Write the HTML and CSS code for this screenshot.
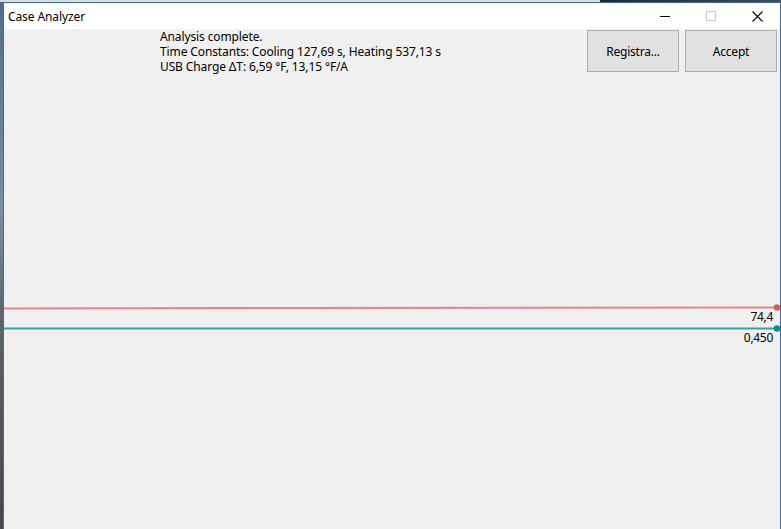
FILE: index.html
```html
<!DOCTYPE html>
<html>
<head>
<meta charset="utf-8">
<title>Case Analyzer</title>
<link rel="stylesheet" href="styles.css">
</head>
<body>
<div class="window">
  <div class="titlebar">
    <span class="title">Case Analyzer</span>
    <div class="controls">
      <span class="ctl">
        <svg width="10" height="10" viewBox="0 0 10 10"><line x1="0" y1="5.5" x2="10" y2="5.5" stroke="#000" stroke-width="1"/></svg>
      </span>
      <span class="ctl">
        <svg width="10" height="10" viewBox="0 0 10 10"><rect x="0.5" y="0.5" width="9" height="9" fill="none" stroke="#c8c8c8" stroke-width="1"/></svg>
      </span>
      <span class="ctl">
        <svg width="11" height="11" viewBox="0 0 11 11"><path d="M0.5 0.5 L10.5 10.5 M10.5 0.5 L0.5 10.5" stroke="#000" stroke-width="1.1" fill="none"/></svg>
      </span>
    </div>
  </div>
  <div class="content">
    <div class="header">
      <div class="status">
        <div class="line">Analysis complete.</div>
        <div class="line">Time Constants: Cooling 127,69 s, Heating 537,13 s</div>
        <div class="line">USB Charge ΔT: 6,59 °F, 13,15 °F/A</div>
      </div>
      <div class="buttons">
        <button class="btn">Registra...</button>
        <button class="btn">Accept</button>
      </div>
    </div>
    <div class="chart">
      <svg class="plot" width="776" height="454" viewBox="0 0 776 454">
        <path d="M0 233.5 L300 233 L773 232.5" stroke="#e08888" stroke-width="2" fill="none"/>
        <circle cx="773" cy="232.5" r="3.3" fill="#d25f5f"/>
        <text x="769" y="246" text-anchor="end" class="lbl">74,4</text>
        <line x1="0" y1="253.5" x2="773" y2="253.5" stroke="#3e9e9e" stroke-width="2"/>
        <circle cx="773" cy="253.5" r="3.3" fill="#178a86"/>
        <text x="769" y="267" text-anchor="end" class="lbl">0,450</text>
      </svg>
    </div>
  </div>
</div>
</body>
</html>
```
FILE: styles.css
```css
html, body {
  margin: 0;
  padding: 0;
}
body {
  width: 781px;
  height: 529px;
  overflow: hidden;
  background:
    linear-gradient(to right, #d8dde2 0, #d8dde2 600px, #1d2a38 600px, #3a4b5c 781px) top / 100% 2px no-repeat,
    linear-gradient(to bottom, #4f6d8a 0, #7a8fa2 40%, #5a646c 60%, #44494f 100%);
  font-family: "Noto Sans", "Open Sans", sans-serif;
  font-size: 12px;
  color: #000;
  padding-top: 2px;
  padding-left: 3px;
  box-sizing: border-box;
}
.window {
  width: 778px;
  height: 527px;
  box-sizing: border-box;
  border: 1px solid #3d6d9c;
  border-bottom: none;
  background: #f0f0f0;
  display: flex;
  flex-direction: column;
}
.titlebar {
  height: 26px;
  background: #fff;
  display: flex;
  align-items: center;
  justify-content: space-between;
  flex: none;
}
.title {
  padding-left: 4px;
  font-size: 12px;
  letter-spacing: -0.1px;
}
.controls {
  display: flex;
  height: 100%;
}
.ctl {
  width: 46px;
  display: flex;
  align-items: center;
  justify-content: center;
}
.content {
  flex: 1;
  display: flex;
  flex-direction: column;
}
.header {
  display: flex;
  justify-content: space-between;
  height: 46px;
  flex: none;
}
.status {
  padding-left: 156px;
  padding-top: 0px;
  letter-spacing: -0.12px;
}
.line {
  height: 15px;
  line-height: 15px;
  overflow: visible;
  white-space: nowrap;
}
.buttons {
  display: flex;
  gap: 6px;
  padding-top: 1px;
  padding-right: 3px;
}
.btn {
  width: 92px;
  height: 42px;
  background: #e1e1e1;
  border: 1px solid #adadad;
  font-family: "Noto Sans", "Open Sans", sans-serif;
  font-size: 12px;
  color: #000;
  padding: 0;
  letter-spacing: -0.2px;
}
.chart {
  flex: 1;
}
.plot {
  display: block;
}
.lbl {
  font-family: "Noto Sans", "Open Sans", sans-serif;
  font-size: 12px;
  fill: #000;
  letter-spacing: -0.3px;
}
```
